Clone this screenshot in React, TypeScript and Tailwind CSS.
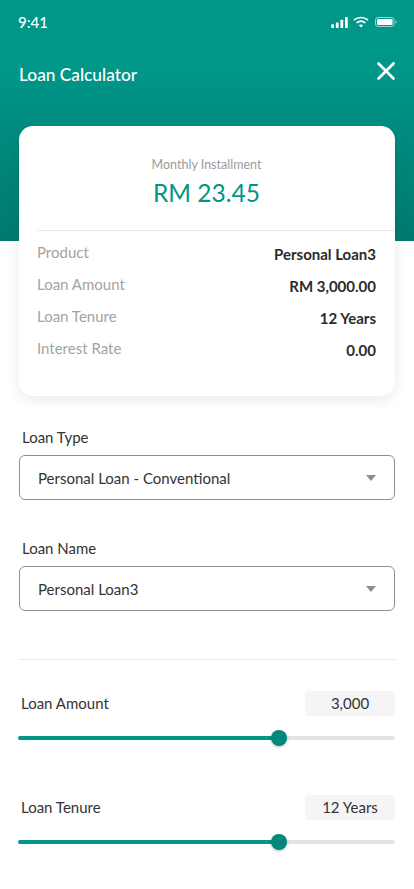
import { X } from 'lucide-react';

const SUMMARY_ROWS = [
  { label: 'Product', value: 'Personal Loan3' },
  { label: 'Loan Amount', value: 'RM 3,000.00' },
  { label: 'Loan Tenure', value: '12 Years' },
  { label: 'Interest Rate', value: '0.00' },
];

function StatusIcons() {
  return (
    <div className="flex items-center gap-[5px]">
      <svg width="17" height="11" viewBox="0 0 18 12" fill="#fff" aria-hidden="true">
        <rect x="0" y="8" width="3" height="4" rx="0.5" />
        <rect x="5" y="6" width="3" height="6" rx="0.5" />
        <rect x="10" y="3" width="3" height="9" rx="0.5" />
        <rect x="15" y="0" width="3" height="12" rx="0.5" />
      </svg>
      <svg width="16" height="12" viewBox="0 0 16 12" fill="none" stroke="#fff" aria-hidden="true">
        <path d="M1 4.2C5 .6 11 .6 15 4.2" strokeWidth="1.7" />
        <path d="M3.6 6.9c2.6-2.2 6.2-2.2 8.8 0" strokeWidth="1.7" />
        <path d="M8 11.6 5.8 9.3c1.3-1 3.1-1 4.4 0z" fill="#fff" stroke="none" />
      </svg>
      <svg width="22" height="10" viewBox="0 0 22 10" fill="none" aria-hidden="true" className="ml-[1px]">
        <rect x="0.5" y="0.5" width="18.5" height="9" rx="2.5" stroke="#fff" strokeOpacity="0.6" />
        <rect x="2" y="2" width="15.5" height="6" rx="1.3" fill="#fff" />
        <path d="M20.5 3.4c.8.3 1.2.9 1.2 1.6s-.4 1.3-1.2 1.6z" fill="#fff" fillOpacity="0.7" />
      </svg>
    </div>
  );
}

function SummaryCard() {
  return (
    <div className="relative mx-[19px] mt-[-115px] h-[270px] rounded-[14px] bg-white pl-[18px] pr-[19px] pt-[31px] shadow-[0_4px_14px_rgba(0,0,0,0.09)]">
      <div className="text-center text-[12.5px] leading-[16px] text-[#9b9b9b]">Monthly Installment</div>
      <div className="mt-[5px] text-center text-[24.5px] leading-[30px] text-[#009688]">RM 23.45</div>
      <div className="mr-[-19px] mt-[22px] border-t border-[#e8e8e8]" />
      <div className="mt-[10px] flex flex-col">
        {SUMMARY_ROWS.map((row) => (
          <div key={row.label} className="flex h-[32px] justify-between">
            <span className="mt-[1px] text-[15px] leading-[20px] text-[#a3a3a3]">{row.label}</span>
            <span className="mt-[3px] text-[15px] font-bold leading-[20px] text-[#2b2b2b]">{row.value}</span>
          </div>
        ))}
      </div>
    </div>
  );
}

function SelectField({ label, value, className }: { label: string; value: string; className: string }) {
  return (
    <div className={className}>
      <div className="pl-[3px] text-[15px] leading-[18px] text-[#333]">{label}</div>
      <div className="mt-[9px] flex h-[45px] items-center justify-between rounded-[6px] border border-[#8f8f8f] pl-[18px] pr-[18px]">
        <span className="mt-[1px] text-[15px] text-[#333]">{value}</span>
        <span className="h-0 w-0 border-x-[5px] border-t-[6px] border-x-transparent border-t-[#8e8e8e]" />
      </div>
    </div>
  );
}

function SliderField({ label, value, className }: { label: string; value: string; className: string }) {
  return (
    <div className={className}>
      <div className="flex items-center justify-between">
        <span className="pb-[2px] pl-[3px] text-[15px] leading-[18px] text-[#333]">{label}</span>
        <span className="flex h-[25px] w-[90px] items-center justify-center rounded-[4px] bg-[#f5f5f5] text-[15px] text-[#333]">
          {value}
        </span>
      </div>
      <div className="relative mt-[20px] flex h-[4px] rounded-full bg-[#e4e4e4]">
        <div className="h-full w-[261px] rounded-full bg-[#009688]" />
        <div className="absolute left-[253px] top-[-6px] h-[16px] w-[16px] rounded-full bg-[#00897b] shadow-[0_1px_3px_rgba(0,0,0,0.25)]" />
      </div>
    </div>
  );
}

export default function App() {
  return (
    <div className="h-[889px] overflow-hidden bg-white font-['Lato','Noto_Sans',sans-serif]">
      <div className="h-[241px] bg-gradient-to-b from-[#009688] from-30% to-[#00796f]">
        <div className="flex items-center justify-between pl-[18px] pr-[17px] pt-[12px]">
          <span className="text-[15px] font-medium leading-[20px] text-white">9:41</span>
          <StatusIcons />
        </div>
        <div className="mt-[25px] flex h-[28px] items-center justify-between pl-[19px] pr-[13px]">
          <span className="mt-[7px] text-[17.3px] font-medium text-white">Loan Calculator</span>
          <X size={30} strokeWidth={2.2} color="#fff" />
        </div>
      </div>
      <SummaryCard />
      <SelectField label="Loan Type" value="Personal Loan - Conventional" className="mx-[19px] mt-[32px]" />
      <SelectField label="Loan Name" value="Personal Loan3" className="mx-[19px] mt-[39px]" />
      <div className="mx-[18px] mt-[48px] border-t border-[#ececec]" />
      <SliderField label="Loan Amount" value="3,000" className="ml-[18px] mr-[19px] mt-[31px]" />
      <SliderField label="Loan Tenure" value="12 Years" className="ml-[18px] mr-[19px] mt-[55px]" />
    </div>
  );
}
